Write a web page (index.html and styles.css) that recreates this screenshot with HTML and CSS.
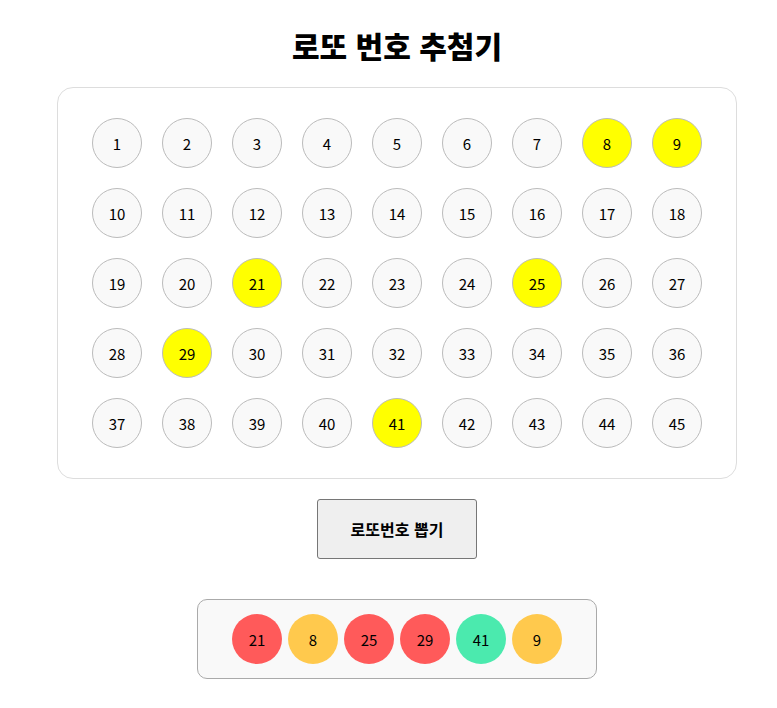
FILE: index.html
```html
<!DOCTYPE html>
<html lang="ko">
<head>
    <meta charset="UTF-8">
    <meta name="viewport" content="width=device-width, initial-scale=1.0">
    <title>로또 번호 추첨기</title>
    <link rel="stylesheet" href="styles.css">
</head>
<body>
    <div class="app">
        <h1>로또 번호 추첨기</h1>

        <div class="board" id="board">
            <!-- 1 ~ 45 번호가 여기에 들어감 -->
        </div>

        <div class="actions">
            <button id="draw-btn">로또번호 뽑기</button>
        </div>

        <div class="result" id="result"></div>
    </div>

    <script>
        document.addEventListener('DOMContentLoaded', function () {
            const picked = [21, 8, 25, 29, 41, 9];
            const board = document.getElementById('board');
            const result = document.getElementById('result');

            for (let i = 1; i <= 45; i++) {
                const ball = document.createElement('div');
                ball.className = 'num';
                if (picked.includes(i)) ball.classList.add('selected');
                ball.innerText = i;
                board.appendChild(ball);
            }

            function colorOf(n) {
                if (n <= 10) return 'yellow';
                if (n <= 20) return 'blue';
                if (n <= 30) return 'red';
                if (n <= 40) return 'gray';
                return 'green';
            }

            picked.forEach(n => {
                const ball = document.createElement('div');
                ball.className = 'ball ' + colorOf(n);
                ball.innerText = n;
                result.appendChild(ball);
            });
        });
    </script>
</body>
</html>
```

FILE: styles.css
```css
body {
    font-family: "Noto Sans CJK KR", "Noto Sans", sans-serif;
    margin: 0;
    padding: 0;
    background-color: #fff;
    color: #000;
}

.app {
    width: 680px;
    margin-left: 57px;
    display: flex;
    flex-direction: column;
    align-items: center;
}

h1 {
    font-size: 30px;
    font-weight: 900;
    line-height: 50px;
    margin: 20px 0 17px;
}

.board {
    box-sizing: border-box;
    width: 680px;
    border: 1px solid #ddd;
    border-radius: 16px;
    padding: 30px 34px;
    display: grid;
    grid-template-columns: repeat(9, 50px);
    gap: 20px;
}

.num {
    box-sizing: border-box;
    width: 50px;
    height: 50px;
    border: 1px solid #bbb;
    border-radius: 50%;
    background-color: #f9f9f9;
    display: flex;
    justify-content: center;
    align-items: center;
    font-size: 15px;
}

.num.selected {
    background-color: #ffff00;
}

.actions {
    margin: 20px 0 40px;
}

button {
    width: 160px;
    height: 60px;
    background-color: #efefef;
    border: 1px solid #767676;
    border-radius: 3px;
    font-family: inherit;
    font-size: 16px;
    font-weight: bold;
    color: #000;
    cursor: pointer;
}

.result {
    box-sizing: border-box;
    width: 400px;
    height: 80px;
    border: 1px solid #aaa;
    border-radius: 10px;
    background-color: #f9f9f9;
    display: flex;
    justify-content: center;
    align-items: center;
    gap: 6px;
}

.ball {
    width: 50px;
    height: 50px;
    border-radius: 50%;
    display: flex;
    justify-content: center;
    align-items: center;
    font-size: 15px;
}

.yellow { background-color: #ffc94d; }
.blue { background-color: #69c8f2; }
.red { background-color: #ff5a5a; }
.gray { background-color: #aaaaaa; }
.green { background-color: #4beaae; }
```
